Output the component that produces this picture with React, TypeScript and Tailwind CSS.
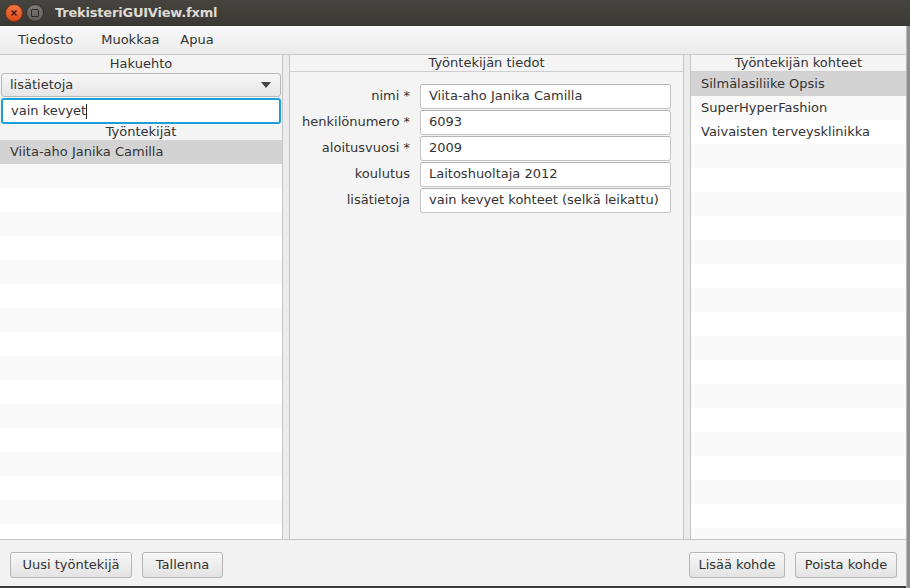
import React from "react";

const font = "font-['DejaVu_Sans','Liberation_Sans',sans-serif]";

function ListRows({ items, total, selected }: { items: string[]; total: number; selected: number }) {
	return (
		<div className="flex flex-col">
			{Array.from({ length: total }).map((_, i) => (
				<div
					key={i}
					className={
						"h-[24px] shrink-0 flex items-center pl-[10px] text-[13px] text-[#333] " +
						(i === selected ? "bg-[#d3d3d3]" : i % 2 === 1 ? "bg-[#f9f9f9]" : "bg-white")
					}
				>
					{items[i] ?? ""}
				</div>
			))}
		</div>
	);
}

function Field({ label, value }: { label: string; value: string }) {
	return (
		<div className="flex items-center h-[26px]">
			<div className="w-[120px] pr-[10px] text-right text-[13px] text-[#333]">{label}</div>
			<div className="w-[251px] h-[25px] flex items-center px-[8px] bg-white border border-[#c5c5c5] border-t-[#b5b5b5] rounded-[3px] text-[13px] text-[#333] whitespace-nowrap overflow-hidden">
				{value}
			</div>
		</div>
	);
}

function Button({ children, w }: { children: React.ReactNode; w: string }) {
	return (
		<button
			className={
				"h-[26px] rounded-[3px] border border-[#b5b5b5] bg-gradient-to-b from-[#f7f7f7] to-[#e3e3e3] text-[13px] text-[#333] shadow-[inset_0_1px_0_#fff] " +
				w
			}
		>
			{children}
		</button>
	);
}

function Divider() {
	return <div className="w-[8px] shrink-0 border-x border-[#c4c4c4] bg-[#ececec]" />;
}

export default function App() {
	return (
		<div className={"w-[910px] h-[588px] overflow-hidden flex flex-col bg-[#f2f2f2] " + font}>
			{/* title bar */}
			<div className="h-[26px] shrink-0 flex items-center bg-gradient-to-b from-[#45443f] to-[#393834]">
				<div className="ml-[5px] w-[18px] h-[18px] rounded-full bg-gradient-to-b from-[#f07746] to-[#df4a16] border border-[#7a3014] flex items-center justify-center">
					<svg width="8" height="8" viewBox="0 0 8 8">
						<path d="M1.5 1.5 L6.5 6.5 M6.5 1.5 L1.5 6.5" stroke="#3a1a0c" strokeWidth="1.4" />
					</svg>
				</div>
				<div className="ml-[3px] w-[18px] h-[18px] rounded-full bg-gradient-to-b from-[#7d7c77] to-[#5c5b57] border border-[#2e2d2a] flex items-center justify-center">
					<div className="w-[8px] h-[8px] border-[1.5px] border-[#2f2e2b] rounded-[1px]" />
				</div>
				<div className="ml-[11px] text-[13px] font-bold text-[#dfdbd2] tracking-[-0.2px]">TrekisteriGUIView.fxml</div>
			</div>

			<div className="flex-1 flex min-h-0">
				<div className="flex-1 flex flex-col min-w-0">
					{/* menu bar */}
					<div className="h-[29px] shrink-0 flex items-center bg-gradient-to-b from-[#f8f8f8] to-[#ebebeb] border-b border-[#c9c9c9] text-[13px] text-[#333]">
						<span className="ml-[18px]">Tiedosto</span>
						<span className="ml-[28px]">Muokkaa</span>
						<span className="ml-[21px]">Apua</span>
					</div>

					{/* main split */}
					<div className="h-[485px] shrink-0 flex border-b border-[#c4c4c4]">
						{/* left */}
						<div className="w-[282px] shrink-0 flex flex-col bg-[#f4f4f4] overflow-hidden">
							<div className="h-[18px] shrink-0 flex items-center justify-center text-[13px] text-[#333]">Hakuehto</div>
							<div className="h-[24px] mx-[1px] shrink-0 flex items-center justify-between px-[8px] rounded-[3px] border border-[#b8b8b8] bg-gradient-to-b from-[#f6f6f6] to-[#e6e6e6] text-[13px] text-[#333]">
								<span>lisätietoja</span>
								<svg width="10" height="6" viewBox="0 0 10 6" className="mr-[1px]">
									<path d="M0 0 L10 0 L5 6 Z" fill="#444" />
								</svg>
							</div>
							<div className="h-[26px] mx-[1px] mt-[1px] shrink-0 flex items-center px-[8px] rounded-[3px] border-2 border-[#1c9fd6] bg-white text-[13px] text-[#333]">
								<span>vain kevyet</span>
								<span className="w-[1px] h-[15px] bg-[#222]" />
							</div>
							<div className="h-[16px] shrink-0 flex items-center justify-center text-[13px] text-[#333]">Työntekijät</div>
							<ListRows items={["Viita-aho Janika Camilla"]} total={17} selected={0} />
						</div>

						<Divider />

						{/* center */}
						<div className="w-[393px] shrink-0 flex flex-col bg-[#f4f4f4]">
							<div className="h-[17px] shrink-0 flex items-center justify-center text-[13px] text-[#333] border-b border-[#cfcfcf]">
								Työntekijän tiedot
							</div>
							<div className="flex-1 flex flex-col pt-[11px] pl-[10px]">
								<Field label="nimi *" value="Viita-aho Janika Camilla" />
								<Field label="henkilönumero *" value="6093" />
								<Field label="aloitusvuosi *" value="2009" />
								<Field label="koulutus" value="Laitoshuoltaja 2012" />
								<Field label="lisätietoja" value="vain kevyet kohteet (selkä leikattu)" />
							</div>
						</div>

						<Divider />

						{/* right */}
						<div className="flex-1 flex flex-col bg-[#f4f4f4] overflow-hidden">
							<div className="h-[17px] shrink-0 flex items-center justify-center text-[13px] text-[#333] border-b border-[#cfcfcf]">
								Työntekijän kohteet
							</div>
							<ListRows
								items={["Silmälasiliike Opsis", "SuperHyperFashion", "Vaivaisten terveysklinikka"]}
								total={20}
								selected={0}
							/>
						</div>
					</div>

					{/* bottom bar */}
					<div className="flex-1 flex items-center pt-[4px] px-[10px] bg-[#f2f2f2]">
						<div className="flex gap-[10px]">
							<Button w="w-[122px]">Uusi työntekijä</Button>
							<Button w="w-[81px]">Tallenna</Button>
						</div>
						<div className="ml-auto flex gap-[10px] mr-[-1px]">
							<Button w="w-[96px]">Lisää kohde</Button>
							<Button w="w-[102px]">Poista kohde</Button>
						</div>
					</div>
					<div className="h-[2px] shrink-0 bg-[#3a3a3a]" />
				</div>
				{/* window edge */}
				<div className="w-[4px] shrink-0 border-l border-[#b9b9b9] bg-[#8f8f8f]" />
			</div>
		</div>
	);
}
